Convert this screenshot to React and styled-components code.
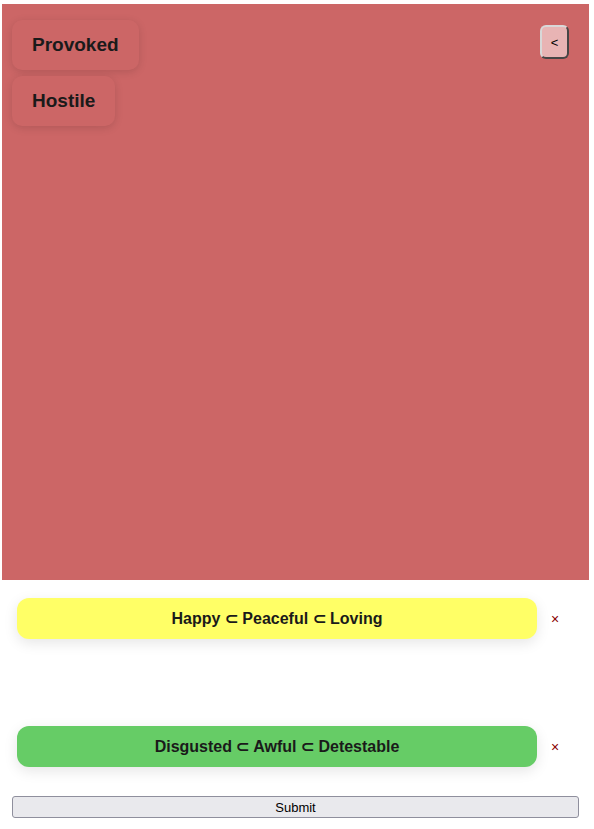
import React from "react";
import styled, { createGlobalStyle } from "styled-components";

const Global = createGlobalStyle`
  html, body { margin: 0; padding: 0; background: #fff; }
  body { font-family: "Liberation Sans", Arial, sans-serif; }
`;

const Page = styled.div`
  display: flex;
  flex-direction: column;
  padding: 4px 5px 0 2px;
`;

const Panel = styled.div`
  position: relative;
  height: 576px;
  background: #cc6666;
  padding: 16px 10px;
  box-sizing: border-box;
  display: flex;
  flex-direction: column;
  align-items: flex-start;
  gap: 6px;
`;

const Choice = styled.button`
  font-family: "Liberation Sans", Arial, sans-serif;
  font-weight: bold;
  font-size: 19px;
  color: #1a1a1a;
  background: #cc6666;
  border: none;
  border-radius: 10px;
  height: 50px;
  padding: 0 20px;
  box-shadow: 0 2px 8px rgba(0, 0, 0, 0.13);
`;

const Back = styled.button`
  position: absolute;
  top: 21px;
  right: 20px;
  width: 29px;
  height: 34px;
  border-radius: 6px;
  background: #e8b4b4;
  border: 2px outset #d8d8d8;
  border-right-color: #9a9a9a;
  border-bottom-color: #9a9a9a;
  font-size: 13px;
  color: #000;
  padding: 0;
  font-family: "Liberation Sans", Arial, sans-serif;
`;

const Rows = styled.div`
  display: flex;
  flex-direction: column;
  gap: 87px;
  padding: 18px 0 0 15px;
`;

const Row = styled.div`
  display: flex;
  align-items: center;
`;

const Pill = styled.div`
  width: 520px;
  height: 41px;
  border-radius: 12px;
  background: ${(p) => p.$bg};
  display: flex;
  align-items: center;
  justify-content: center;
  font-weight: bold;
  font-size: 16px;
  color: #1a1a1a;
  box-shadow: 0 4px 14px rgba(0, 0, 0, 0.1);
`;

const Close = styled.span`
  margin-left: 14px;
  font-size: 14px;
  color: #8b0000;
`;

const Submit = styled.button`
  margin: 29px 10px 0 10px;
  height: 22px;
  border: 1px solid #8f8f9d;
  border-radius: 3px;
  background: #e9e9ed;
  font-family: "Liberation Sans", Arial, sans-serif;
  font-size: 13px;
  color: #000;
`;

const rows = [
  { text: "Happy ⊂ Peaceful ⊂ Loving", bg: "#ffff66" },
  { text: "Disgusted ⊂ Awful ⊂ Detestable", bg: "#66cc66" },
];

export default function App() {
  return (
    <>
      <Global />
      <Page>
        <Panel>
          <Choice>Provoked</Choice>
          <Choice>Hostile</Choice>
          <Back>&lt;</Back>
        </Panel>
        <Rows>
          {rows.map((r) => (
            <Row key={r.text}>
              <Pill $bg={r.bg}>{r.text}</Pill>
              <Close>×</Close>
            </Row>
          ))}
        </Rows>
        <Submit>Submit</Submit>
      </Page>
    </>
  );
}
